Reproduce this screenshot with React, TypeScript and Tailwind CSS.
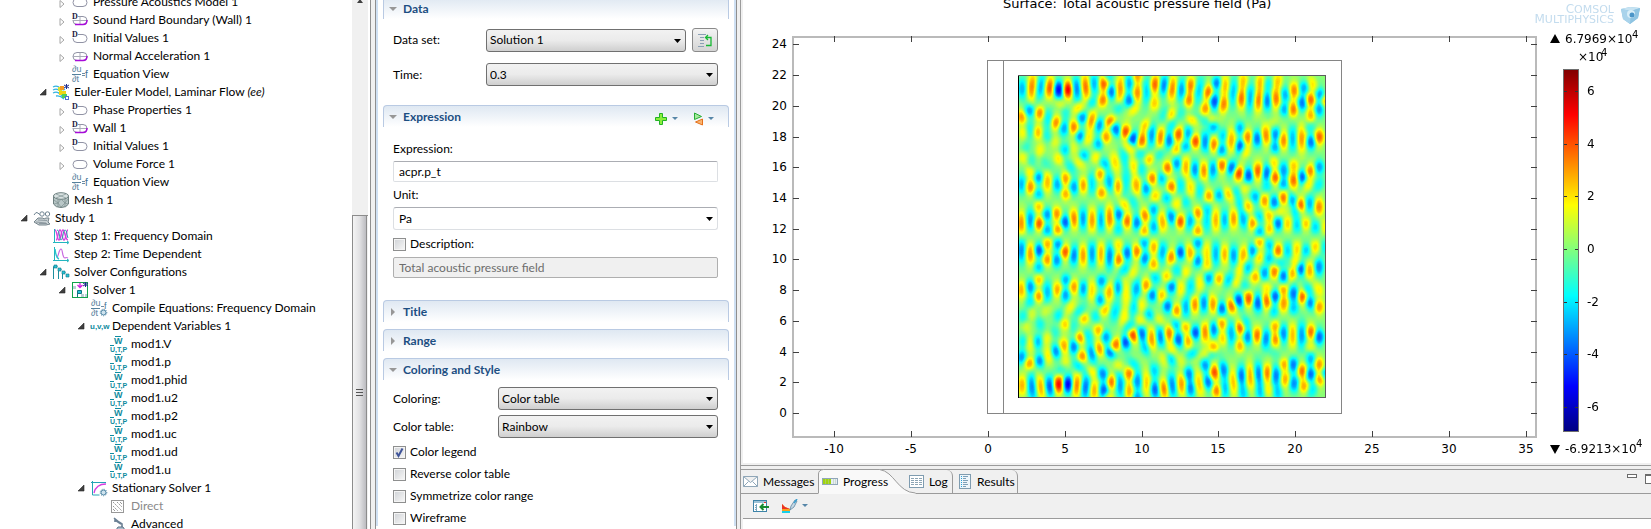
import { ReactNode, useId, useState } from 'react'

type IconName =
  | 'domain'
  | 'domainDefault'
  | 'boundary'
  | 'boundaryDefault'
  | 'equation'
  | 'compile'
  | 'flow'
  | 'mesh'
  | 'study'
  | 'frequency'
  | 'time'
  | 'solvers'
  | 'solver'
  | 'variables'
  | 'field'
  | 'stationary'
  | 'direct'
  | 'advanced'

interface TreeItem {
  label: string
  tag?: string
  depth: 1 | 2 | 3 | 4 | 5
  icon: IconName
  state?: 'open' | 'closed'
  disabled?: boolean
}

const TREE: TreeItem[] = [
  { label: 'Pressure Acoustics Model 1', depth: 3, icon: 'domain', state: 'closed' },
  { label: 'Sound Hard Boundary (Wall) 1', depth: 3, icon: 'boundaryDefault', state: 'closed' },
  { label: 'Initial Values 1', depth: 3, icon: 'domainDefault', state: 'closed' },
  { label: 'Normal Acceleration 1', depth: 3, icon: 'boundary', state: 'closed' },
  { label: 'Equation View', depth: 3, icon: 'equation' },
  { label: 'Euler-Euler Model, Laminar Flow', tag: '(ee)', depth: 2, icon: 'flow', state: 'open' },
  { label: 'Phase Properties 1', depth: 3, icon: 'domainDefault', state: 'closed' },
  { label: 'Wall 1', depth: 3, icon: 'boundaryDefault', state: 'closed' },
  { label: 'Initial Values 1', depth: 3, icon: 'domainDefault', state: 'closed' },
  { label: 'Volume Force 1', depth: 3, icon: 'domain', state: 'closed' },
  { label: 'Equation View', depth: 3, icon: 'equation' },
  { label: 'Mesh 1', depth: 2, icon: 'mesh' },
  { label: 'Study 1', depth: 1, icon: 'study', state: 'open' },
  { label: 'Step 1: Frequency Domain', depth: 2, icon: 'frequency' },
  { label: 'Step 2: Time Dependent', depth: 2, icon: 'time' },
  { label: 'Solver Configurations', depth: 2, icon: 'solvers', state: 'open' },
  { label: 'Solver 1', depth: 3, icon: 'solver', state: 'open' },
  { label: 'Compile Equations: Frequency Domain', depth: 4, icon: 'compile' },
  { label: 'Dependent Variables 1', depth: 4, icon: 'variables', state: 'open' },
  { label: 'mod1.V', depth: 5, icon: 'field' },
  { label: 'mod1.p', depth: 5, icon: 'field' },
  { label: 'mod1.phid', depth: 5, icon: 'field' },
  { label: 'mod1.u2', depth: 5, icon: 'field' },
  { label: 'mod1.p2', depth: 5, icon: 'field' },
  { label: 'mod1.uc', depth: 5, icon: 'field' },
  { label: 'mod1.ud', depth: 5, icon: 'field' },
  { label: 'mod1.u', depth: 5, icon: 'field' },
  { label: 'Stationary Solver 1', depth: 4, icon: 'stationary', state: 'open' },
  { label: 'Direct', depth: 5, icon: 'direct', disabled: true },
  { label: 'Advanced', depth: 5, icon: 'advanced' },
]

const INDENT = {
  1: 'pl-[18px]',
  2: 'pl-[37px]',
  3: 'pl-[56px]',
  4: 'pl-[75px]',
  5: 'pl-[94px]',
}

function Domain({ isDefault, boundary }: { isDefault?: boolean; boundary?: boolean }) {
  return (
    <>
      <rect x="1" y="4.5" width="14" height="8" rx="4" fill="#fff" stroke="#9193a5" />
      {boundary && (
        <>
          <path d="M1 8.5h14M8 4.5v8" stroke="#a9abb8" />
          <path d="M3 12.5h8q4 0 4-4.5" fill="none" stroke="#a70bd9" strokeWidth="1.5" />
        </>
      )}
      {isDefault && (
        <>
          <rect x="0" y="1" width="6" height="7" fill="#fff" />
          <text x="0" y="7" fontSize="8" fontWeight="700" fontFamily="Liberation Serif, serif" fill="#1a2040">D</text>
        </>
      )}
    </>
  )
}

function Derivative() {
  return (
    <g fontFamily="Liberation Sans, sans-serif" fontSize="9" fill="#55809c">
      <text x="0" y="6">∂u</text>
      <text x="0" y="16">∂t</text>
      <path d="M0 8.5h9" stroke="#55809c" />
    </g>
  )
}

function Gear() {
  return (
    <>
      <circle cx="12.5" cy="12.5" r="2.5" fill="#cfe3ee" stroke="#4f86a5" />
      <circle cx="12.5" cy="12.5" r="3.3" fill="none" stroke="#4f86a5" strokeDasharray="1 1.2" />
    </>
  )
}

function Star() {
  return <path d="M13.5 0v5M11 1l5 3M16 1l-5 3" stroke="#1c2a8c" />
}

const ICONS: Record<IconName, ReactNode> = {
  domain: <Domain />,
  domainDefault: <Domain isDefault />,
  boundary: <Domain boundary />,
  boundaryDefault: <Domain isDefault boundary />,
  equation: (
    <>
      <Derivative />
      <path d="M10 7.5h3M10 9.5h3" stroke="#6b8da6" />
      <text x="13" y="12" fontSize="10" fontFamily="Liberation Sans, sans-serif" fill="#3f7496">f</text>
    </>
  ),
  compile: (
    <>
      <Derivative />
      <path d="M10 6.5h3" stroke="#6b8da6" />
      <text x="13" y="9" fontSize="9" fontFamily="Liberation Sans, sans-serif" fill="#3f7496">f</text>
      <Gear />
    </>
  ),
  flow: (
    <>
      <path d="M0 3q4-2 7 1t5 1M0 6q4-2 7 1t4 1M0 9q4-2 7 1t4 2M3 12q4-1 8 3" fill="none" stroke="#35b4e0" strokeWidth="1.3" />
      <path d="M5 3h4v4H5z" fill="#d7e332" />
      <path d="M7 2h4v4H7z" fill="#f59a23" />
      <path d="M6 7h7v4H6z" fill="#f0d515" />
      <path d="M9 10h5v4H9z" fill="#4fd05a" />
      <path d="M12 12h4v4h-4z" fill="#4a70d8" />
      <path d="M13 13h2v2h-2z" fill="#fff" />
      <Star />
    </>
  ),
  mesh: (
    <>
      <path d="M0.5 4v8q2 3.5 7.5 3.5t7.5-3.5V4z" fill="#b9c7c7" stroke="#6e8080" />
      <ellipse cx="8" cy="4" rx="7.5" ry="3.3" fill="#d9e2e2" stroke="#6e8080" />
      <path d="M1 8l4 3 3-4 4 4 3-4M1 12l4-1 3 4 4-4 3 1M5 7v8M12 7v8M3 2l10 4M13 2L3 6" fill="none" stroke="#7e9090" strokeWidth="0.7" />
    </>
  ),
  study: (
    <>
      <path d="M0 5q2-4 4-2t2 2" fill="none" stroke="#6d8290" />
      <circle cx="8" cy="4" r="2.2" fill="#fff" stroke="#6d8290" />
      <circle cx="13.5" cy="4" r="2.2" fill="#fff" stroke="#6d8290" />
      <path d="M0 12l4-4h5l1 1 2-1h3l-1 4 2 2-4 1H5z" fill="#c9d1d4" stroke="#75848c" />
      <path d="M2 12l10 1M4 10l9 .5M5 13.5h8" stroke="#75848c" strokeWidth="0.7" />
    </>
  ),
  frequency: (
    <>
      <path d="M1.5 1v14M0 14.5h15M14 13l2 1.5-2 1.5" fill="none" stroke="#24b5bf" />
      <path d="M2 2c2 0 2 10 4 10s2-10 4-10 2 10 5 10" fill="none" stroke="#d63de0" strokeWidth="1.3" />
      <path d="M3 12c2 0 2-10 4-10s2 10 4 10 2-10 4-10" fill="none" stroke="#d63de0" strokeWidth="1.3" />
      <path d="M4 2c3 0 2 10 4 10s2-10 4-10 2 6 3 8" fill="none" stroke="#2a9fae" />
    </>
  ),
  time: (
    <>
      <path d="M1.5 1v14M0 14.5h15M14 13l2 1.5-2 1.5" fill="none" stroke="#24b5bf" />
      <path d="M4 12c2-4 2-9 4-9s1 9 4 9q1-1 3 0" fill="none" stroke="#c86be0" strokeWidth="1.2" />
      <path d="M2 3q1 9 4 10" fill="none" stroke="#2ac4cf" strokeWidth="1.4" />
    </>
  ),
  solvers: (
    <>
      <path d="M0.5 15V2.5h4M5.5 15V5.5h3M9.5 15V8.5h3" fill="none" stroke="#1d8f9f" />
      <path d="M1 1h3v3H1zM5 4h3v3H5zM9 7h3v3H9zM13 10h3v3h-3z" fill="#27c3d6" stroke="#137485" strokeWidth="0.6" />
    </>
  ),
  solver: (
    <>
      <rect x="0.5" y="0.5" width="15" height="15" fill="#fff" stroke="#11a24b" />
      <path d="M1 4h3v3H1zM9 12h3v3H9zM13 12h2v3h-2z" fill="#b9cdd6" />
      <path d="M5.5 8.5h4v3h-4z" fill="#27c3d6" stroke="#137485" />
      <path d="M5.5 9v6" stroke="#137485" />
      <path d="M8 1v4M5.5 3L8 5.5 10.5 3" fill="none" stroke="#cf1fe0" strokeWidth="1.3" />
      <Star />
    </>
  ),
  variables: (
    <text x="-1" y="11" fontSize="8" fontWeight="700" fontFamily="Liberation Sans, sans-serif" fill="#0f8ca0">u,v,w</text>
  ),
  field: (
    <g fontFamily="Liberation Sans, sans-serif" fontWeight="700" fill="#0f8ca0">
      <path d="M5 0.5h6M0 9.5h4" stroke="#0f8ca0" />
      <text x="4" y="8" fontSize="9">W</text>
      <text x="0" y="16" fontSize="7">U,T,P</text>
    </g>
  ),
  stationary: (
    <>
      <path d="M1.5 1v14h7M0 2.5h15" fill="none" stroke="#24a5b5" />
      <path d="M3 13q2-9 12-9" fill="none" stroke="#d63de0" strokeWidth="1.3" />
      <Gear />
    </>
  ),
  direct: (
    <>
      <rect x="1.5" y="2.5" width="12" height="12" fill="#fff" stroke="#989898" />
      <path d="M3 4l9 9M7 4l5 5M3 8l5 5" stroke="#989898" strokeDasharray="2 1" />
      <path d="M10 4l2 2M3 11l2 2" stroke="#989898" />
    </>
  ),
  advanced: (
    <>
      <path d="M4 2l5 4M5 4l6 4M9 6l3 2v5M5 3v3" fill="none" stroke="#6a7f93" strokeWidth="1.6" />
      <path d="M6 14h9l-2-3H8z" fill="#aebfcd" stroke="#5b7388" />
    </>
  ),
}

function Icon({ name }: { name: IconName }) {
  return (
    <svg viewBox="0 0 16 16" className="w-4 h-4 shrink-0 overflow-visible" aria-hidden="true">
      {ICONS[name]}
    </svg>
  )
}

function ModelTree() {
  return (
    <div className="flex flex-1 min-w-0 bg-white">
      <ul className="flex-1 min-w-0 overflow-hidden -mt-[7px]">
        {TREE.map((item, i) => (
          <li key={i} className={`flex items-center h-[18px] whitespace-nowrap ${INDENT[item.depth]}`}>
            <span className="flex w-3 h-3 mr-1 items-center justify-center shrink-0">
              {item.state === 'open' && (
                <svg viewBox="0 0 8 8" className="w-2 h-2" aria-hidden="true">
                  <path d="M7 1v6H1z" fill="#404040" stroke="#262626" strokeWidth="0.6" />
                </svg>
              )}
              {item.state === 'closed' && (
                <svg viewBox="0 0 8 10" className="w-2 h-2.5 mt-1" aria-hidden="true">
                  <path d="M2 1.5v7l4-3.5z" fill="#fff" stroke="#a6a6a6" />
                </svg>
              )}
            </span>
            <Icon name={item.icon} />
            <span className={`ml-[5px] ${item.disabled ? 'text-[#8a8a8a]' : ''}`}>
              {item.label}
              {item.tag && <i> {item.tag}</i>}
            </span>
          </li>
        ))}
      </ul>
      <div className="flex flex-col w-4 shrink-0 bg-[#f0f0f0]">
        <svg viewBox="0 0 16 16" className="w-4 h-4 -mt-2" aria-hidden="true">
          <path d="M5 11l3-4 3 4z" fill="#404040" />
        </svg>
        <div className="flex-[207] border-b border-[#8c8c8c]" />
        <div className="flex flex-[314] w-[15px] items-center justify-center border-x border-[#8c8c8c] bg-linear-to-r from-[#f4f4f4] via-[#e2e2e4] to-[#bcbcc0]">
          <svg viewBox="0 0 8 9" className="w-2 h-[9px] mt-10" aria-hidden="true">
            <path d="M0 1.5h7M0 4.5h7M0 7.5h7" stroke="#555" />
          </svg>
        </div>
      </div>
    </div>
  )
}

interface SectionProps {
  title: string
  defaultOpen?: boolean
  tools?: ReactNode
  children?: ReactNode
}

function Section({ title, defaultOpen = false, tools, children }: SectionProps) {
  const [open, setOpen] = useState(defaultOpen)

  return (
    <section>
      <div className="flex items-center h-[22px] border-x border-t border-[#b9cae3] rounded-t-[4px] bg-linear-to-b from-[#dfe8f2] to-white">
        <button
          type="button"
          aria-expanded={open}
          onClick={() => setOpen(!open)}
          className="flex flex-1 items-center gap-[6px] pl-[5px] font-bold text-[#1c4e82]"
        >
          <svg viewBox="0 0 8 8" className="w-2 h-2" aria-hidden="true">
            <path d={open ? 'M0 2h8l-4 4z' : 'M2 0l4 4-4 4z'} fill="#979797" />
          </svg>
          {title}
        </button>
        {tools}
      </div>
      {open && <div className="pl-[10px] pr-[11px]">{children}</div>}
    </section>
  )
}

interface SelectFieldProps {
  id: string
  options: string[]
  flat?: boolean
}

function SelectField({ id, options, flat }: SelectFieldProps) {
  return (
    <div className="relative flex-1 min-w-0">
      <select
        id={id}
        className={`appearance-none block w-full h-[23px] rounded-[3px] border pr-5 outline-none ${
          flat
            ? 'pl-[5px] border-[#dcdfe3] border-t-[#abadb3] bg-white'
            : 'pl-[3px] border-[#707070] bg-linear-to-b from-[#f2f2f2] from-0% via-[#ebebeb] via-50% to-[#cfcfcf]'
        }`}
      >
        {options.map((option) => (
          <option key={option}>{option}</option>
        ))}
      </select>
      <svg viewBox="0 0 7 4" className="absolute right-[5px] top-[10px] w-[7px] h-1 pointer-events-none" aria-hidden="true">
        <path d="M0 0h7L3.5 4z" />
      </svg>
    </div>
  )
}

function Checkbox({ label, defaultChecked }: { label: string; defaultChecked?: boolean }) {
  return (
    <label className="flex items-center gap-1 h-[22px]">
      <span className="relative w-[13px] h-[13px]">
        <input
          type="checkbox"
          defaultChecked={defaultChecked}
          className="peer appearance-none block w-[13px] h-[13px] border border-[#8e8f8f] bg-linear-to-br from-[#cfd2d6] to-[#f8f8f8] shadow-[inset_0_0_0_1px_#f4f4f4]"
        />
        <svg viewBox="0 0 13 13" className="absolute inset-0 hidden peer-checked:block pointer-events-none" aria-hidden="true">
          <path d="M3.5 6.5l2 3.5 4-7.5" fill="none" stroke="#3f5499" strokeWidth="2" />
        </svg>
      </span>
      {label}
    </label>
  )
}

function MenuArrow() {
  return (
    <svg viewBox="0 0 6 4" className="w-[6px] h-1" aria-hidden="true">
      <path d="M0 0h6L3 3z" fill="#5686a8" />
    </svg>
  )
}

function ExpressionTools() {
  return (
    <div className="flex gap-3 pr-[14px] pt-1">
      <button type="button" aria-label="Insert expression" className="flex items-center gap-1">
        <svg viewBox="0 0 14 14" className="w-[14px] h-[14px]" aria-hidden="true">
          <path d="M5.5 1.5h3v4h4v3h-4v4h-3v-4h-4v-3h4z" fill="#8aee3c" stroke="#22b324" />
        </svg>
        <MenuArrow />
      </button>
      <button type="button" aria-label="Replace expression" className="flex items-center gap-1">
        <svg viewBox="0 0 14 14" className="w-[14px] h-[14px]" aria-hidden="true">
          <path d="M4.5 1l7 3.5-7 3z" fill="#a4ea9c" stroke="#27ad35" />
          <path d="M12.5 7v6l-7-3z" fill="#f9b36f" stroke="#e5701a" />
        </svg>
        <MenuArrow />
      </button>
    </div>
  )
}

function SettingsPanel() {
  const id = useId()

  return (
    <div className="w-full border-x border-[#8f8f8f] bg-white">
      <div className="h-full border-x-2 border-[#cfe0f3] px-[5px]">
        <div className="-mt-[3px]">
          <Section title="Data" defaultOpen>
            <div className="flex items-center pt-[9px] mb-[11px]">
              <label htmlFor={`${id}-set`} className="w-[93px]">Data set:</label>
              <SelectField id={`${id}-set`} options={['Solution 1']} />
              <button
                type="button"
                aria-label="Go to source"
                className="flex w-[26px] h-6 ml-[6px] items-center justify-center rounded-[3px] border border-[#8a8a8a] bg-linear-to-b from-[#f4f4f4] to-[#d4d4d4]"
              >
                <svg viewBox="0 0 16 16" className="w-4 h-4" aria-hidden="true">
                  <path d="M1 2.5h8M3 5.5h4M3 8.5h4M3 11.5h4M1 14.5h6" stroke="#8aa0b5" />
                  <path d="M9 13.5h5v-8H9M11 3L8.5 5.5 11 8" fill="none" stroke="#18b834" strokeWidth="1.3" />
                </svg>
              </button>
            </div>
            <div className="flex items-center mb-[19px]">
              <label htmlFor={`${id}-time`} className="w-[93px]">Time:</label>
              <SelectField id={`${id}-time`} options={['0.3']} />
            </div>
          </Section>
        </div>
        <Section title="Expression" defaultOpen tools={<ExpressionTools />}>
          <label htmlFor={`${id}-expr`} className="block pt-[13px] leading-[18px]">Expression:</label>
          <input
            id={`${id}-expr`}
            defaultValue="acpr.p_t"
            className="block w-full h-[21px] mt-[3px] px-[5px] rounded-[2px] border border-[#dcdfe3] border-t-[#abadb3] bg-white outline-none"
          />
          <label htmlFor={`${id}-unit`} className="block mt-1 mb-[3px] leading-[18px]">Unit:</label>
          <SelectField id={`${id}-unit`} options={['Pa']} flat />
          <div className="mt-[3px]">
            <Checkbox label="Description:" />
          </div>
          <input
            aria-label="Description"
            disabled
            defaultValue="Total acoustic pressure field"
            className="block w-full h-[21px] mt-0.5 mb-[22px] px-[5px] rounded-[2px] border border-[#afafaf] bg-[#f0f0f0] text-[#6d6d6d]"
          />
        </Section>
        <div className="mb-[7px]">
          <Section title="Title" />
        </div>
        <div className="mb-[7px]">
          <Section title="Range" />
        </div>
        <Section title="Coloring and Style" defaultOpen>
          <div className="flex items-center pt-[7px]">
            <label htmlFor={`${id}-coloring`} className="w-[105px]">Coloring:</label>
            <SelectField id={`${id}-coloring`} options={['Color table', 'Uniform']} />
          </div>
          <div className="flex items-center mt-[5px] mb-[3px]">
            <label htmlFor={`${id}-table`} className="w-[105px]">Color table:</label>
            <SelectField id={`${id}-table`} options={['Rainbow', 'Thermal', 'GrayScale']} />
          </div>
          <Checkbox label="Color legend" defaultChecked />
          <Checkbox label="Reverse color table" />
          <Checkbox label="Symmetrize color range" />
          <Checkbox label="Wireframe" />
        </Section>
      </div>
    </div>
  )
}

// Upper half of the pressure field: x, y, half height, amplitude, tilt.
// The lower half is the same field with the opposite sign.
const PEAKS: number[][] = [
  [66, 85, 38, -0.5, 0], [96, 80, 50, 0.6, 4], [122, 80, 45, -0.5, 8], [149, 82, 38, 0.7, 5],
  [176, 88, 30, -0.95, 0], [204, 88, 30, 0.98, 0], [230, 85, 42, -0.6, -4], [257, 80, 44, 0.65, -4],
  [282, 70, 36, -0.5, 0], [275, 127, 24, -0.35, 20], [311, 70, 28, 0.7, 0], [308, 120, 26, 0.6, 8],
  [335, 95, 26, -0.65, 0], [325, 48, 20, -0.35, 0], [360, 85, 50, 0.55, 4], [387, 68, 32, -0.5, 0],
  [387, 120, 25, -0.6, 0], [412, 98, 34, 0.58, 0], [412, 48, 24, 0.5, 0], [440, 92, 50, -0.42, 4],
  [464, 72, 32, 0.7, 5], [463, 130, 28, 0.42, 8], [492, 75, 36, -0.62, 5], [516, 85, 46, 0.6, 5],
  [544, 88, 40, -0.55, 5], [571, 75, 32, 0.6, 5], [566, 120, 28, 0.58, 10], [597, 90, 52, -0.42, 8],
  [624, 95, 28, 0.65, 10], [615, 145, 24, 0.55, 10], [649, 68, 24, -0.62, 0], [643, 124, 28, -0.75, 0],
  [675, 75, 38, 0.45, 0], [670, 132, 32, 0.6, 8], [699, 95, 52, -0.45, 4], [724, 115, 36, 0.65, 0],
  [729, 62, 34, 0.42, 4], [750, 112, 50, -0.5, 4], [775, 120, 42, 0.6, 4], [780, 65, 34, 0.42, 4],
  [801, 122, 34, -0.62, 0], [804, 70, 26, -0.3, 0], [827, 115, 36, 0.62, 0], [833, 62, 34, 0.42, 4],
  [855, 102, 28, -0.5, 0], [852, 148, 24, -0.5, 0], [881, 90, 30, 0.6, 0], [879, 148, 28, 0.65, 0],
  [911, 82, 24, -0.5, 0], [906, 128, 28, -0.65, 4], [931, 118, 26, 0.68, 0], [931, 165, 24, 0.48, 0],
  [937, 70, 30, 0.35, -20], [959, 102, 24, -0.55, 0], [957, 148, 26, -0.55, 0], [977, 120, 24, 0.5, 0],

  [64, 170, 26, 0.56, -10], [89, 150, 24, -0.56, -8], [90, 208, 32, -0.3, 0], [119, 158, 25, 0.6, 4],
  [114, 216, 26, 0.48, 0], [145, 175, 40, -0.35, 0], [140, 226, 26, -0.25, -20], [167, 187, 26, 0.6, 10],
  [192, 205, 28, -0.52, 8], [197, 155, 30, -0.25, 0], [221, 200, 26, 0.62, 0], [235, 142, 24, 0.42, 40],
  [180, 130, 24, 0.3, -60], [247, 173, 22, -0.58, 10], [240, 228, 22, -0.58, 10], [275, 180, 36, 0.56, 12],
  [264, 234, 28, 0.32, 20], [298, 195, 28, -0.56, 8], [295, 252, 24, -0.5, 0], [331, 182, 24, 0.68, 30],
  [318, 230, 24, 0.55, 0], [348, 208, 26, -0.65, -20], [376, 214, 26, 0.75, 10], [399, 235, 26, -0.75, 15],
  [426, 240, 30, 0.66, 8], [436, 195, 28, 0.4, 20], [398, 150, 26, 0.35, 40], [355, 145, 26, -0.35, 30],
  [455, 225, 40, -0.56, 4], [481, 230, 38, 0.6, 4], [507, 240, 30, -0.62, 0], [515, 195, 24, -0.3, 20],
  [535, 222, 28, 0.7, 8], [527, 268, 22, 0.42, 30], [564, 218, 26, -0.5, 0], [556, 260, 22, -0.48, 10],
  [586, 243, 26, 0.75, 0], [615, 245, 38, -0.6, 0], [641, 253, 30, 0.62, -4], [640, 202, 24, -0.5, 20],
  [664, 270, 24, -0.56, 0], [668, 225, 26, -0.4, 0], [693, 240, 44, 0.5, 0], [719, 203, 24, -0.5, 0],
  [720, 258, 26, -0.7, 4], [742, 230, 28, 0.6, 0], [735, 275, 26, 0.35, 15], [771, 235, 30, -0.66, 0],
  [797, 225, 36, 0.6, -4], [826, 222, 26, -0.58, 0], [824, 262, 24, -0.5, 0], [850, 240, 34, 0.6, 0],
  [877, 235, 48, -0.48, 0], [904, 235, 48, 0.56, 0], [932, 245, 28, -0.66, 0], [957, 230, 28, 0.7, 0],
  [512, 162, 24, 0.4, 30], [575, 180, 24, 0.38, -60], [490, 165, 34, -0.3, 20], [545, 160, 30, -0.25, 20],
  [610, 180, 26, -0.25, -50], [640, 175, 24, 0.25, -60], [930, 200, 22, -0.25, 60], [820, 185, 24, 0.2, 60],
  [68, 218, 24, 0.32, 0], [76, 262, 24, -0.25, 20],

  [120, 270, 26, 0.32, 10], [175, 295, 24, 0.36, -20], [195, 268, 22, -0.42, 0], [165, 245, 24, 0.25, 30],
  [252, 285, 22, -0.45, 0], [288, 290, 26, 0.36, 20], [313, 310, 24, -0.45, -20], [345, 305, 38, 0.4, -12],
  [240, 308, 28, 0.32, -40], [210, 320, 28, -0.32, -30], [140, 312, 28, -0.25, -30], [222, 262, 26, 0.25, 0],
  [96, 300, 26, -0.22, 0], [68, 290, 26, 0.32, 0], [372, 290, 40, -0.32, -10], [386, 262, 26, 0.4, -40],
  [400, 315, 34, 0.38, -10], [447, 298, 24, 0.45, 30], [420, 280, 24, -0.35, 30], [425, 325, 28, -0.35, 10],
  [478, 282, 24, -0.32, 30], [376, 365, 52, -0.34, 4],
  [64, 372, 34, -0.5, 0], [91, 380, 28, 0.58, 0], [90, 335, 24, 0.32, -20], [116, 352, 22, -0.56, 0],
  [116, 402, 22, -0.45, 0], [142, 365, 40, 0.48, 0], [172, 372, 30, -0.52, 0], [196, 355, 26, 0.55, 0],
  [197, 402, 22, 0.5, 0], [222, 380, 28, -0.55, 0], [250, 375, 30, 0.55, 0], [275, 370, 44, -0.4, 0],
  [300, 342, 24, 0.52, 10], [304, 398, 24, 0.56, 0], [328, 365, 36, -0.5, -8], [354, 378, 30, 0.55, 0],
  [409, 375, 34, 0.52, -6], [438, 385, 26, -0.56, 0], [456, 355, 25, 0.62, 0], [485, 355, 24, -0.45, 0],
  [502, 322, 24, 0.65, 0], [530, 310, 24, -0.56, 0], [514, 380, 24, 0.65, 0], [500, 412, 22, -0.42, 20],
  [465, 408, 24, 0.42, 20], [557, 320, 40, 0.5, 0], [584, 328, 32, -0.6, 0], [611, 332, 36, 0.6, 0],
  [638, 328, 34, -0.56, 4], [665, 315, 26, 0.66, 0], [694, 322, 28, -0.66, 12], [716, 340, 26, 0.76, 10],
  [745, 345, 28, -0.72, 0], [773, 332, 32, 0.7, 0], [799, 338, 32, -0.66, 6], [825, 352, 26, 0.7, 0],
  [820, 305, 24, 0.38, 0], [850, 330, 32, -0.56, 0], [849, 372, 22, -0.5, 0], [880, 360, 30, 0.66, 0],
  [880, 315, 26, 0.42, 0], [907, 350, 26, -0.7, 4], [929, 332, 26, 0.6, 8], [957, 320, 26, -0.55, 0],
  [922, 375, 28, 0.35, 20], [955, 375, 30, -0.35, 20], [572, 382, 36, 0.38, 0], [542, 375, 34, -0.36, 0],
  [625, 407, 24, 0.55, 0], [656, 405, 24, -0.5, 0], [685, 402, 28, 0.42, -20], [600, 390, 36, -0.34, 6],
  [710, 395, 24, -0.32, -20], [735, 385, 24, 0.3, 50], [765, 410, 24, -0.5, -10], [793, 422, 25, 0.56, -4],
  [822, 425, 25, -0.62, 0], [850, 412, 25, 0.66, 0], [877, 420, 28, -0.5, -20], [901, 434, 25, 0.7, 0],
  [928, 430, 32, -0.5, 0], [956, 440, 32, 0.6, 0], [743, 438, 24, 0.45, -20], [717, 430, 28, -0.3, -10],
  [800, 380, 22, -0.3, 50], [530, 430, 24, 0.34, 30], [558, 425, 24, -0.34, 0], [400, 425, 28, -0.3, -20],

  [64, 490, 44, 0.6, 0], [91, 480, 40, -0.56, 0], [117, 490, 25, 0.72, 0], [116, 438, 22, 0.45, 0],
  [142, 462, 24, -0.56, 0], [142, 510, 24, -0.52, 0], [170, 460, 26, 0.58, 0], [174, 508, 22, 0.55, 0],
  [196, 485, 26, -0.72, 0], [222, 475, 36, 0.62, -4], [249, 475, 40, -0.56, 0], [276, 480, 46, 0.56, 0],
  [303, 480, 46, -0.5, 0], [328, 472, 46, 0.6, 0], [356, 463, 26, -0.62, -8], [354, 508, 24, -0.36, 0],
  [381, 482, 28, 0.66, 0], [372, 432, 24, 0.4, -30], [410, 487, 28, -0.62, 0], [434, 465, 26, 0.6, -8],
  [432, 512, 22, 0.5, 0], [460, 448, 24, -0.5, 0], [461, 500, 28, -0.5, 0], [487, 485, 40, 0.5, -4],
  [513, 470, 28, -0.6, -8], [541, 484, 26, 0.72, 0], [570, 482, 34, -0.5, 10], [592, 458, 25, 0.6, -8],
  [593, 512, 23, 0.55, 0], [620, 485, 46, -0.38, 0], [622, 445, 24, -0.3, -10], [647, 480, 46, 0.5, 0],
  [673, 478, 36, -0.5, 0], [700, 475, 36, 0.56, 0], [729, 478, 34, -0.5, -10], [757, 488, 26, 0.56, 12],
  [778, 515, 22, -0.5, 0], [775, 468, 24, -0.42, -20], [808, 505, 26, 0.42, 20], [806, 468, 24, 0.42, 0],
  [833, 490, 25, -0.66, 0], [862, 490, 32, 0.42, 0], [836, 455, 22, 0.32, 80], [890, 495, 32, -0.4, 0],
  [917, 490, 24, 0.44, 0], [945, 500, 28, -0.42, 0], [976, 500, 32, 0.35, 0], [885, 455, 24, -0.3, 0],
]

const FIELD = [...PEAKS, ...PEAKS.map(([x, y, ry, amplitude, tilt]) => [x, 1060 - y, ry, -amplitude, -tilt])]

function Waves({ stretch, gain }: { stretch: number; gain: number }) {
  return (
    <>
      {FIELD.map(([x, y, ry, amplitude, tilt], i) => (
        <ellipse
          key={i}
          cx={x}
          cy={y}
          rx={24}
          ry={ry * stretch}
          transform={`rotate(${tilt} ${x} ${y})`}
          fill={amplitude > 0 ? 'url(#crest)' : 'url(#trough)'}
          opacity={Math.abs(amplitude) ** 1.2 * gain}
        />
      ))}
    </>
  )
}

function PressureField() {
  return (
    <svg x="276" y="76" width="307" height="322" viewBox="57 47 920 966" preserveAspectRatio="none">
      <defs>
        <radialGradient id="crest">
          <stop offset="0" stopColor="#fff" />
          <stop offset="0.25" stopColor="#fff" stopOpacity="0.86" />
          <stop offset="0.5" stopColor="#fff" stopOpacity="0.5" />
          <stop offset="0.75" stopColor="#fff" stopOpacity="0.15" />
          <stop offset="1" stopColor="#fff" stopOpacity="0" />
        </radialGradient>
        <radialGradient id="trough">
          <stop offset="0" stopColor="#000" />
          <stop offset="0.25" stopColor="#000" stopOpacity="0.86" />
          <stop offset="0.5" stopColor="#000" stopOpacity="0.5" />
          <stop offset="0.75" stopColor="#000" stopOpacity="0.15" />
          <stop offset="1" stopColor="#000" stopOpacity="0" />
        </radialGradient>
        <filter id="rainbow" filterUnits="userSpaceOnUse" x="57" y="47" width="920" height="966" colorInterpolationFilters="sRGB">
          <feComponentTransfer>
            <feFuncR type="table" tableValues="0 0 0 0 0.5 1 1 1 0.5" />
            <feFuncG type="table" tableValues="0 0 0.5 1 1 1 0.5 0 0" />
            <feFuncB type="table" tableValues="0.5 1 1 1 0.5 0 0 0 0" />
          </feComponentTransfer>
        </filter>
      </defs>
      <g filter="url(#rainbow)">
        <rect x="57" y="47" width="920" height="966" fill="#828282" />
        <Waves stretch={2.2} gain={0.35} />
        <Waves stretch={1.2} gain={0.68} />
      </g>
    </svg>
  )
}

const UNIT = 15.36
const toX = (value: number) => Math.round(245 + value * UNIT)
const toY = (value: number) => Math.round(413 - value * UNIT)

const X_TICKS = [-10, -5, 0, 5, 10, 15, 20, 25, 30, 35]
const Y_TICKS = [0, 2, 4, 6, 8, 10, 12, 14, 16, 18, 20, 22, 24]
const LEGEND_TICKS = [6, 4, 2, 0, -2, -4, -6]

function Plot() {
  return (
    <svg viewBox="0 0 908 463" className="block w-full font-['DejaVu_Sans',sans-serif] text-[12px]" role="img" aria-label="Total acoustic pressure field">
      <text x="260" y="8" fontSize="13">Surface: Total acoustic pressure field (Pa)</text>

      <g shapeRendering="crispEdges" fill="none">
        <rect x="50" y="37" width="743" height="400" stroke="#bababa" strokeWidth="2" />
        {X_TICKS.map((tick) => (
          <path key={tick} d={`M${toX(tick)} 36v6M${toX(tick)} 437v-6`} stroke="#404040" />
        ))}
        {Y_TICKS.map((tick) => (
          <path key={tick} d={`M50 ${toY(tick)}h6M794 ${toY(tick)}h-6`} stroke="#404040" />
        ))}
      </g>
      {X_TICKS.map((tick) => (
        <text key={tick} x={toX(tick)} y="453" textAnchor="middle">{tick}</text>
      ))}
      {Y_TICKS.map((tick) => (
        <text key={tick} x="44" y={toY(tick) + 4} textAnchor="end">{tick}</text>
      ))}

      <PressureField />
      <g shapeRendering="crispEdges" fill="none">
        <path d="M244.5 60.5h354v353h-354zM260.5 60v353" stroke="#858585" />
        <rect x="275.5" y="75.5" width="307" height="322" stroke="#5c5c5c" />
        <path d="M275.5 76v322" stroke="#000" />
      </g>

      <defs>
        <linearGradient id="scale" x1="0" y1="0" x2="0" y2="1">
          <stop offset="0" stopColor="#800000" />
          <stop offset="0.125" stopColor="#f00" />
          <stop offset="0.375" stopColor="#ff0" />
          <stop offset="0.625" stopColor="#0ff" />
          <stop offset="0.875" stopColor="#00f" />
          <stop offset="1" stopColor="#000080" />
        </linearGradient>
      </defs>
      <rect x="820.5" y="69.5" width="15" height="362" fill="url(#scale)" stroke="#6e6e6e" />
      {LEGEND_TICKS.map((tick) => {
        const y = Math.round(249 - tick * 26.3)
        return (
          <g key={tick}>
            <path d={`M821 ${y}.5h3M832 ${y}.5h3`} stroke="#333" />
            <text x="844" y={y + 4}>{tick}</text>
          </g>
        )
      })}
      <path d="M807 43h10l-5-9zM807 445h10l-5 9z" />
      <text x="822" y="43">6.7969×10</text>
      <text x="889" y="38" fontSize="10">4</text>
      <text x="835" y="61">×10</text>
      <text x="858" y="56" fontSize="10">4</text>
      <text x="822" y="453">-6.9213×10</text>
      <text x="893" y="447" fontSize="10">4</text>

      <g fill="#c3dcee" textAnchor="end">
        <text x="871" y="13" fontSize="12"><tspan>C</tspan><tspan fontSize="11">OMSOL</tspan></text>
        <text x="871" y="23" fontSize="12"><tspan>M</tspan><tspan fontSize="11">ULTIPHYSICS</tspan></text>
      </g>
      <path d="M878 9l9-2 10 1-2 10-8 6-7-5z" fill="#8ec5e4" />
      <path d="M878 9l9-2 10 1-9 3z" fill="#c7e3f2" />
      <path d="M888 11l9-3-2 10-8 6z" fill="#8fc4e2" />
      <path d="M878 9l10 2-1 13-7-5z" fill="#a9d3eb" />
      <circle cx="888" cy="14" r="4" fill="#d9eef8" />
      <circle cx="889" cy="15" r="2.5" fill="#4b95c8" />
    </svg>
  )
}

function BottomPane() {
  return (
    <div className="flex flex-col flex-1 min-h-0 mt-[3px] border-t border-[#9b9b9b] bg-[#f0f0f0]">
      <div className="flex h-6 border-b border-[#9b9b9b]">
        <div role="tablist" className="flex flex-1 whitespace-nowrap">
          <button type="button" role="tab" aria-selected="false" className="flex items-center w-[77px] pl-0.5 gap-[5px] rounded-tl-[6px]">
            <svg viewBox="0 0 15 11" className="w-[15px] h-[11px] shrink-0" aria-hidden="true">
              <path d="M0.5 0.5h14v10H0.5zM0.5 0.5l7 6 7-6M0.5 10.5l5-5M14.5 10.5l-5-5" fill="#fff" stroke="#90a7b8" />
            </svg>
            Messages
          </button>
          <button type="button" role="tab" aria-selected="true" className="relative flex items-center w-[89px] pl-[4px] gap-[5px]">
            <svg viewBox="0 0 98 25" className="absolute left-0 -top-px w-[98px] h-[25px]" aria-hidden="true">
              <path d="M0.5 25V5q0-4 5-4.5h56c15 2 18 23 36 23.5V25z" fill="#f9f9f9" />
              <path d="M0.5 24V5q0-4 5-4.5h56c15 2 18 23 36 23.5" fill="none" stroke="#9b9b9b" />
            </svg>
            <svg viewBox="0 0 16 7" className="relative w-4 h-[7px] shrink-0" aria-hidden="true">
              <rect x="0.5" y="0.5" width="15" height="6" fill="#e6eef5" stroke="#90a7b8" />
              <path d="M1 1h8v5H1z" fill="#9fd40e" />
              <path d="M3.5 1v5M6.5 1v5M11.5 1v5M13.5 1v5" stroke="#b7c9a8" strokeWidth="0.5" />
            </svg>
            <span className="relative">Progress</span>
          </button>
          <button type="button" role="tab" aria-selected="false" className="relative flex items-center w-[46px] pl-[2px] gap-[5px] border-r border-[#9b9b9b] rounded-tr-[6px]">
            <svg viewBox="0 0 15 13" className="w-[15px] h-[13px] shrink-0" aria-hidden="true">
              <rect x="0.5" y="0.5" width="14" height="12" fill="#fff" stroke="#7f9cb0" />
              <path d="M2 3.5h3M6 3.5h3M10 3.5h3M2 5.5h3M6 5.5h3M10 5.5h3M2 7.5h3M6 7.5h3M10 7.5h3M2 9.5h3M6 9.5h3M10 9.5h3" stroke="#8ca4b4" />
            </svg>
            Log
          </button>
          <button type="button" role="tab" aria-selected="false" className="flex items-center w-[65px] pl-[6px] gap-[6px] border-r border-[#9b9b9b] rounded-tr-[6px]">
            <svg viewBox="0 0 12 15" className="w-3 h-[15px] shrink-0" aria-hidden="true">
              <rect x="0.5" y="0.5" width="11" height="14" fill="#eef6fb" stroke="#7f9cb0" />
              <path d="M4 2.5h5M4 4.5h3M4 6.5h5M4 8.5h4M4 10.5h5M4 12.5h3" stroke="#7ea0b8" />
              <path d="M2 2.5h1M2 4.5h1M2 6.5h1M2 8.5h1M2 10.5h1M2 12.5h1" stroke="#27a0d8" />
            </svg>
            Results
          </button>
        </div>
        <div className="flex gap-2 pt-1 -mr-1 overflow-hidden">
          <button type="button" aria-label="Minimize" className="w-[10px] h-1 border border-[#6b6b6b] bg-white" />
          <button type="button" aria-label="Maximize" className="w-[10px] h-[10px] border border-t-2 border-[#6b6b6b] bg-white" />
        </div>
      </div>
      <div className="flex items-center gap-3 h-6 shrink-0 pl-3">
        <button type="button" aria-label="Show progress log">
          <svg viewBox="0 0 16 12" className="w-4 h-3" aria-hidden="true">
            <rect x="0.5" y="0.5" width="13" height="11" fill="#fff" stroke="#3d83a8" />
            <path d="M1 2h12" stroke="#9cc3d8" strokeWidth="2" />
            <path d="M3.5 4v7M2 5.5h1M2 7.5h1M2 9.5h1" stroke="#7aa7c0" />
            <path d="M11 2.5h2" stroke="#e33" />
            <path d="M16 7H8M10.5 4L7.5 7l3 3" fill="none" stroke="#168a30" strokeWidth="2" />
          </svg>
        </button>
        <button type="button" aria-label="Clear" className="flex items-center gap-1">
          <svg viewBox="0 0 17 14" className="w-[17px] h-[14px]" aria-hidden="true">
            <path d="M1 5l3 3 5 2v3H1z" fill="#f9a01b" />
            <path d="M1 5l3 3 5 2H1z" fill="#ea3323" />
            <path d="M1 12h8v2H1z" fill="#18cfe8" />
            <path d="M9 11l1-4 4-6 2 1-3 6z" fill="#c6d9e6" stroke="#5d84a0" strokeWidth="0.8" />
            <path d="M13 4l3-4" stroke="#3a9fd0" strokeWidth="1.5" />
          </svg>
          <MenuArrow />
        </button>
      </div>
      <div className="flex-1 ml-0.5 border-t border-[#9b9b9b] bg-white" />
    </div>
  )
}

export default function App() {
  return (
    <div className="flex h-screen overflow-hidden bg-[#f0f0f0] font-[Lato,'Open_Sans',sans-serif] text-[12px] leading-[18px] text-black">
      <div className="flex w-[371px] shrink-0 border-r border-[#8f8f8f] pr-0.5 bg-white">
        <ModelTree />
      </div>
      <div className="w-1 shrink-0" />
      <div className="flex w-[362px] shrink-0">
        <SettingsPanel />
      </div>
      <div className="flex flex-col flex-1 min-w-0 ml-[3px] border-l border-[#9b9b9b]">
        <div className="shrink-0 border-b border-[#9b9b9b] pl-0.5 pb-0.5">
          <div className="bg-white">
            <Plot />
          </div>
        </div>
        <BottomPane />
      </div>
    </div>
  )
}
